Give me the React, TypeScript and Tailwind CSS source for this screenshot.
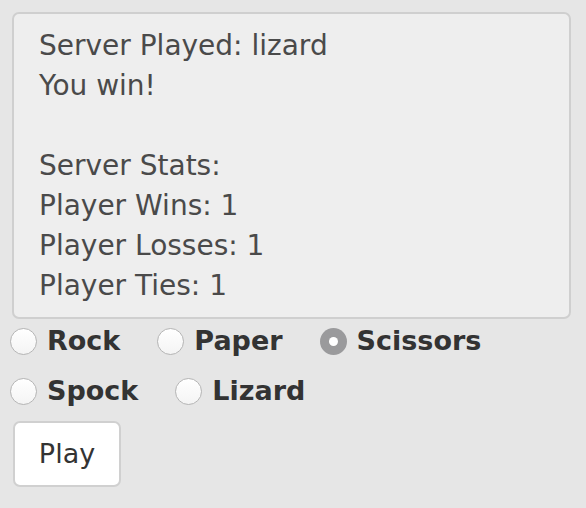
import React, { useState } from 'react';

const choices = [['Rock', 'Paper', 'Scissors'], ['Spock', 'Lizard']];

function Radio({ checked }: { checked: boolean }) {
    return checked ? (
        <span className="flex h-[27px] w-[27px] shrink-0 items-center justify-center rounded-full bg-[#9a9a9c]">
            <span className="h-[9px] w-[9px] rounded-full bg-white" />
        </span>
    ) : (
        <span className="h-[27px] w-[27px] shrink-0 rounded-full border border-[#b5b5b5] bg-gradient-to-b from-white to-[#f4f4f4]" />
    );
}

export default function App() {
    const [pick, setPick] = useState('Scissors');

    return (
        <div className="min-h-[508px] w-[586px] bg-[#e6e6e6] pt-[12px] font-['DejaVu_Sans',Verdana,sans-serif]">
            {/* result box */}
            <div className="ml-[12px] h-[307px] w-[559px] rounded-[7px] border-2 border-[#cfcfcf] bg-[#eeeeee] px-[25px] pt-[12px] text-[28px] leading-[40px] text-[#4a4a4a]">
                <div>Server Played: lizard</div>
                <div>You win!</div>
                <div>&nbsp;</div>
                <div>Server Stats:</div>
                <div>Player Wins: 1</div>
                <div>Player Losses: 1</div>
                <div>Player Ties: 1</div>
            </div>

            {/* choices */}
            <div className="-mt-[3px] flex flex-col">
                {choices.map((row, r) => (
                    <div key={r} className="flex h-[50px] items-center gap-[37px] pl-[10px]">
                        {row.map((c) => (
                            <label key={c} className="flex cursor-pointer items-center gap-[10px]" onClick={() => setPick(c)}>
                                <Radio checked={pick === c} />
                                <span className="text-[27px] font-bold text-[#333]">{c}</span>
                            </label>
                        ))}
                    </div>
                ))}
            </div>

            <button className="ml-[13px] mt-[5px] h-[66px] w-[108px] rounded-[7px] border-2 border-[#d0d0d0] bg-white text-[27px] text-[#333]">
                Play
            </button>
        </div>
    );
}
